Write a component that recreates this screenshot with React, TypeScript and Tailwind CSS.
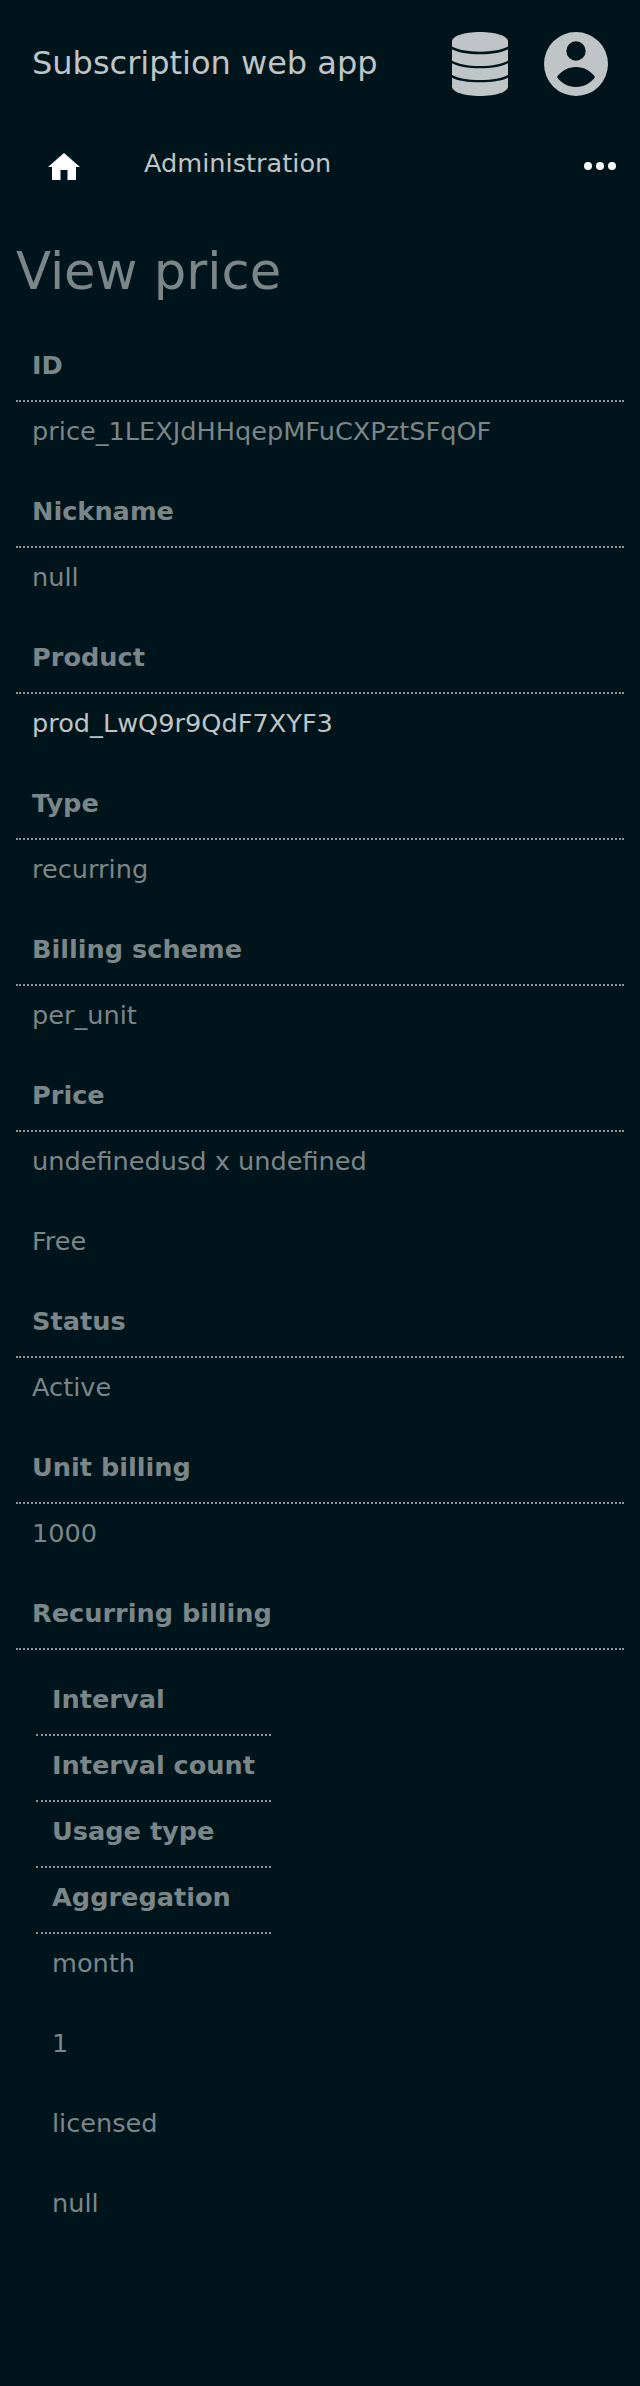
import React from 'react';

const fields: { label: string; values: string[]; bright?: boolean }[] = [
  { label: 'ID', values: ['price_1LEXJdHHqepMFuCXPztSFqOF'] },
  { label: 'Nickname', values: ['null'] },
  { label: 'Product', values: ['prod_LwQ9r9QdF7XYF3'], bright: true },
  { label: 'Type', values: ['recurring'] },
  { label: 'Billing scheme', values: ['per_unit'] },
  { label: 'Price', values: ['undefinedusd x undefined', 'Free'] },
  { label: 'Status', values: ['Active'] },
  { label: 'Unit billing', values: ['1000'] },
];

const recurringLabels = ['Interval', 'Interval count', 'Usage type', 'Aggregation'];
const recurringValues = ['month', '1', 'licensed', 'null'];

const DatabaseIcon = () => (
  <svg width="56" height="64" viewBox="0 0 56 64" fill="currentColor">
    <path d="M0 9.500C0 4 12.500 0 28 0S56 4 56 9.500V14.500C51 17.500 40 19.700 28 19.700S5 17.500 0 14.500z" />
    <path d="M0 17.300C5 20.300 16 22.300 28 22.300S51 20.300 56 17.300V28.700C51 31.700 40 34 28 34S5 31.700 0 28.700z" />
    <path d="M0 31.300C5 34.300 16 36.300 28 36.300S51 34.300 56 31.300V43C51 46 40 48 28 48S5 46 0 43z" />
    <path d="M0 45.700C5 48.500 16 50.300 28 50.300S51 48.500 56 45.700V54.500C56 60 43.500 64 28 64S0 60 0 54.500z" />
  </svg>
);

const UserIcon = () => (
  <svg width="64" height="64" viewBox="0 0 64 64">
    <path
      fill="currentColor"
      fillRule="evenodd"
      d="M32 0a32 32 0 1 0 0 64a32 32 0 1 0 0-64zM32 9.300a9.700 9.700 0 1 1 0 19.400a9.700 9.700 0 1 1 0-19.400zM13 45C17 39 24 35 32 35S47 39 51 45C47 51 40 55 32 55S17 51 13 45z"
    />
  </svg>
);

const HomeIcon = () => (
  <svg width="32" height="27" viewBox="0 0 32 27" fill="#fff">
    <path d="M16 0L32 14H28V27H19.500V17H12.500V27H4V14H0z" />
  </svg>
);

const MoreIcon = () => (
  <svg width="32" height="8" viewBox="0 0 32 8" fill="#fff">
    <circle cx="4" cy="4" r="4" />
    <circle cx="16" cy="4" r="4" />
    <circle cx="28" cy="4" r="4" />
  </svg>
);

export default function App() {
  return (
    <div className="w-[640px] h-[2386px] bg-[#00141b] text-[#7b8689] text-[25.6px] leading-[38.4px] font-['DejaVu_Sans',sans-serif]">
      <header className="h-[128px] px-[32px] flex items-center text-[#bfc5c6]">
        <span className="text-[32px] leading-[48px] flex-1 -mt-[2px]">Subscription web app</span>
        <DatabaseIcon />
        <span className="ml-[36px]">
          <UserIcon />
        </span>
      </header>

      <nav className="h-[76px] pl-[48px] pr-[24px] flex items-center">
        <HomeIcon />
        <span className="ml-[64px] -mt-[6px] text-[#bfc5c6]">Administration</span>
        <span className="ml-auto">
          <MoreIcon />
        </span>
      </nav>

      <h1 className="mt-[37px] pl-[16px] text-[51.2px] leading-[61.44px]">View price</h1>

      <main className="mt-[28.56px] px-[16px]">
        {fields.map((f) => (
          <section key={f.label} className="pb-[26.6px]">
            <div className="h-[71px] px-[16px] flex items-center font-bold border-b-2 border-dotted border-[#8b9698]">
              {f.label}
            </div>
            <div className={`px-[16px] pt-[10px] flex flex-col gap-[41.6px] ${f.bright ? 'text-[#bfc5c6]' : ''}`}>
              {f.values.map((v) => (
                <span key={v}>{v}</span>
              ))}
            </div>
          </section>
        ))}

        <section>
          <div className="h-[71px] px-[16px] flex items-center font-bold border-b-2 border-dotted border-[#8b9698]">
            Recurring billing
          </div>
          <div className="mt-[20px] ml-[20px] w-fit">
            {recurringLabels.map((l) => (
              <div key={l} className="h-[66px] px-[16px] pb-[5px] flex items-center font-bold border-b-2 border-dotted border-[#8b9698]">
                {l}
              </div>
            ))}
            <div className="px-[16px] pt-[10px] flex flex-col gap-[41.6px]">
              {recurringValues.map((v) => (
                <span key={v}>{v}</span>
              ))}
            </div>
          </div>
        </section>
      </main>
    </div>
  );
}
